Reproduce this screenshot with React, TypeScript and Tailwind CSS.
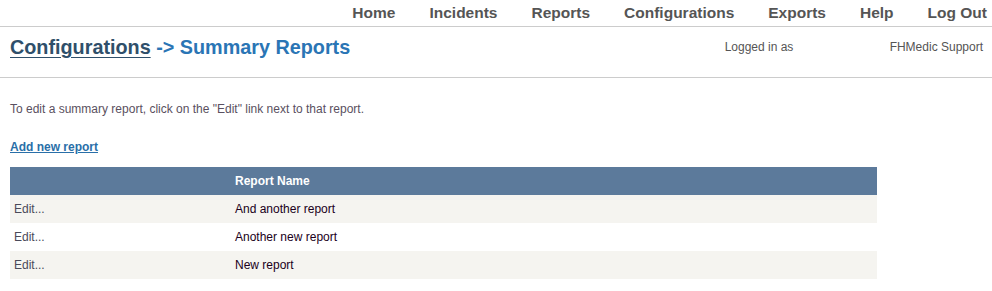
const navItems = ["Home", "Incidents", "Reports", "Configurations", "Exports", "Help", "Log Out"];

const reports = ["And another report", "Another new report", "New report"];

export default function App() {
  return (
    <div className="min-h-[291px] bg-white font-['Liberation_Sans',Arial,sans-serif] text-[#555]">
      {/* Top navigation */}
      <div className="flex h-[27px] items-center justify-end gap-[34px] border-b border-[#ccc] pr-[5px] pb-[1px]">
        {navItems.map((item) => (
          <a key={item} href="#" className="text-[15.5px] font-bold text-[#555]">
            {item}
          </a>
        ))}
      </div>

      {/* Page header */}
      <div className="flex h-[51px] items-start border-b border-[#ccc] pt-[6px] pl-[10px]">
        <h1 className="text-[19.8px] font-bold">
          <a href="#" className="text-[#2f4f6a] underline underline-offset-[3px]">Configurations</a>
          <span className="text-[#2a75b5]"> -&gt; Summary Reports</span>
        </h1>
        <div className="ml-auto flex pt-[5px] text-[12px] text-[#555]">
          <span className="w-[165px] text-left">Logged in as</span>
          <span className="pr-[9px]">FHMedic Support</span>
        </div>
      </div>

      {/* Content */}
      <div className="pl-[10px] pt-[22px]">
        <p className="text-[12px] text-[#5a5060]">
          To edit a summary report, click on the "Edit" link next to that report.
        </p>
        <a href="#" className="mt-[20px] block text-[12px] font-bold text-[#2a6fa8] underline">
          Add new report
        </a>
        <table className="mt-[11px] w-[867px] border-collapse text-[12px]">
          <thead>
            <tr className="h-[28px] bg-[#5c7a9b] text-left text-white">
              <th className="w-[225px]"></th>
              <th className="font-bold">Report Name</th>
            </tr>
          </thead>
          <tbody>
            {reports.map((name, i) => (
              <tr key={name} className={i % 2 === 0 ? "h-[28px] bg-[#f5f4f0]" : "h-[28px] bg-white"}>
                <td className="pl-[4px] text-[#4a4a5a]">Edit...</td>
                <td className="text-[#200020]">{name}</td>
              </tr>
            ))}
          </tbody>
        </table>
      </div>
    </div>
  );
}
